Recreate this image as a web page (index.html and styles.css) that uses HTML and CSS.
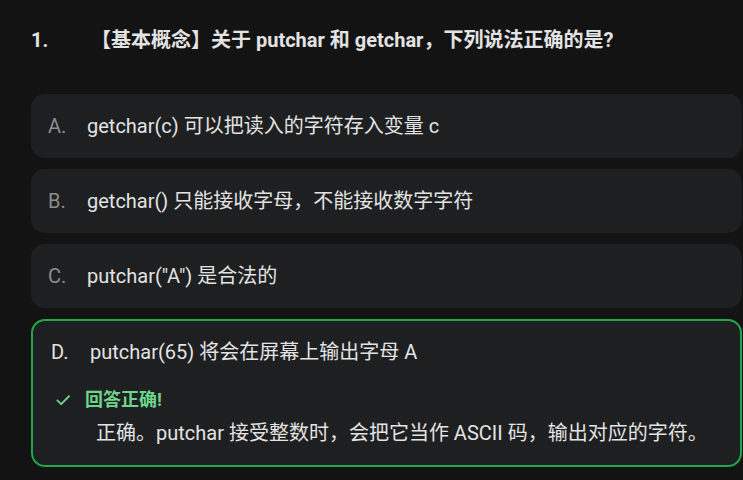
FILE: index.html
```html
<!DOCTYPE html>
<html lang="zh-CN">
<head>
  <meta charset="UTF-8" />
  <meta name="viewport" content="width=device-width, initial-scale=1.0" />
  <title>Quiz</title>
  <link rel="stylesheet" href="styles.css">
</head>
<body>
  <div class="quiz">
    <div class="question">
      <span class="q-num">1.</span>
      <span class="q-text">【基本概念】关于 putchar 和 getchar，下列说法正确的是?</span>
    </div>

    <div class="options">
      <div class="option">
        <span class="letter">A.</span>
        <span class="opt-text">getchar(c) 可以把读入的字符存入变量 c</span>
      </div>
      <div class="option">
        <span class="letter">B.</span>
        <span class="opt-text">getchar() 只能接收字母，不能接收数字字符</span>
      </div>
      <div class="option">
        <span class="letter">C.</span>
        <span class="opt-text">putchar("A") 是合法的</span>
      </div>
      <div class="option correct">
        <div class="opt-row">
          <span class="letter">D.</span>
          <span class="opt-text">putchar(65) 将会在屏幕上输出字母 A</span>
        </div>
        <div class="feedback">
          <div class="feedback-title">
            <svg class="check" viewBox="0 0 24 24" width="18" height="18">
              <path d="M4.5 12.5l5 5L20 7" fill="none" stroke="currentColor" stroke-width="2.4" stroke-linecap="round" stroke-linejoin="round"/>
            </svg>
            <span>回答正确!</span>
          </div>
          <p class="explain">正确。putchar 接受整数时，会把它当作 ASCII 码，输出对应的字符。</p>
        </div>
      </div>
    </div>
  </div>
</body>
</html>
```

FILE: styles.css
```css
body {
  margin: 0;
  padding: 0 0 0 31px;
  background: #131314;
  color: #e3e3e3;
  font-family: Roboto, "Noto Sans CJK SC", sans-serif;
  font-size: 20px;
  line-height: 26px;
}

.quiz {
  width: 711px;
}

.question {
  display: flex;
  padding-top: 27px;
  margin-bottom: 41px;
  font-weight: bold;
}

.q-num {
  width: 60px;
  flex-shrink: 0;
}

.options {
  display: flex;
  flex-direction: column;
  gap: 11px;
}

.option {
  display: flex;
  align-items: center;
  background: #1e1f20;
  border-radius: 14px;
  padding: 19px 17px;
}

.letter {
  width: 39px;
  flex-shrink: 0;
  color: #8e8e8e;
}

.option.correct {
  display: block;
  border: 2px solid #1fa848;
  padding: 18px 18px 19px 18px;
}

.opt-row {
  display: flex;
  align-items: center;
}

.correct .letter {
  color: #e3e3e3;
}

.feedback {
  margin-top: 22px;
}

.feedback-title {
  display: flex;
  align-items: center;
  gap: 13px;
  color: #6dd58c;
  font-weight: bold;
  font-size: 18px;
  padding-left: 3px;
}

.check {
  display: block;
}

.explain {
  margin: 7px 0 0 0;
  padding-left: 45px;
}
```
